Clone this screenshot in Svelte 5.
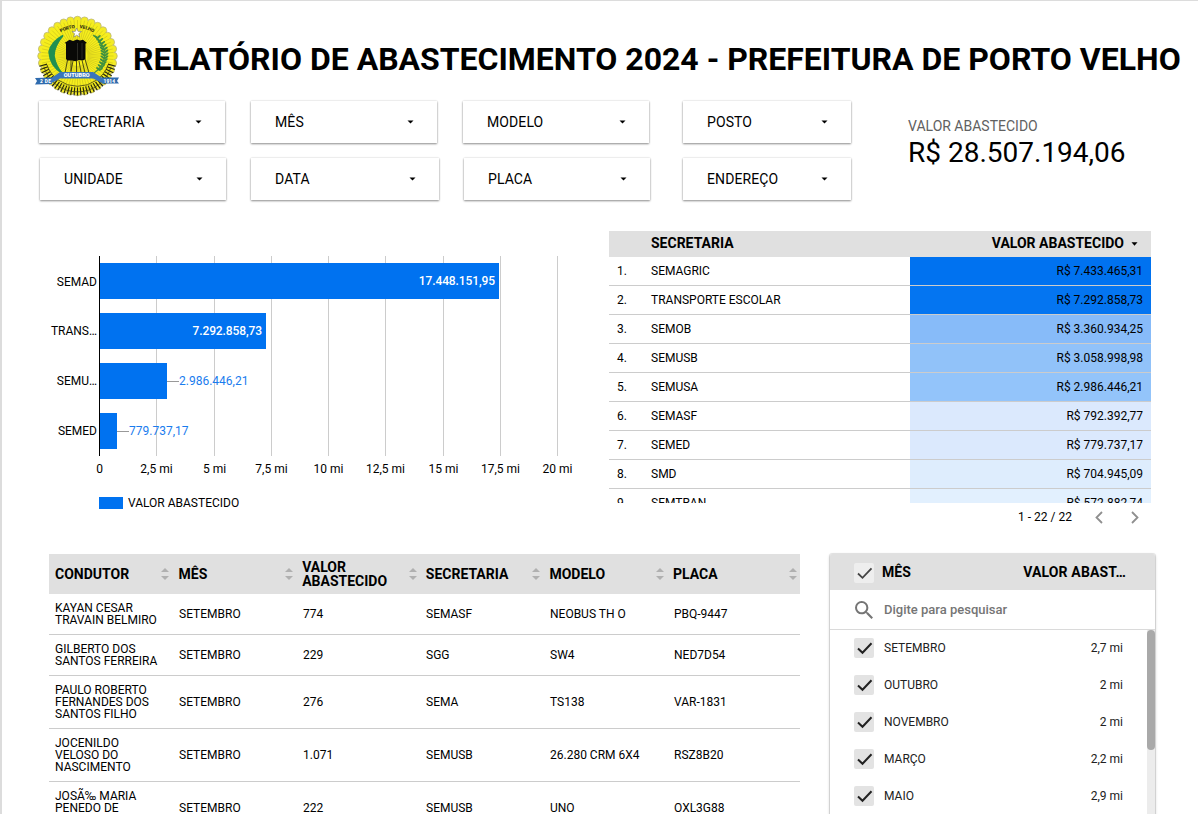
<script>
  const filterRows = [
    [
      { label: 'SECRETARIA', gap: 0, width: 186 },
      { label: 'MÊS', gap: 26, width: 186 },
      { label: 'MODELO', gap: 26, width: 186 },
      { label: 'POSTO', gap: 34, width: 168 }
    ],
    [
      { label: 'UNIDADE', gap: 1, width: 186 },
      { label: 'DATA', gap: 25, width: 188 },
      { label: 'PLACA', gap: 25, width: 186 },
      { label: 'ENDEREÇO', gap: 33, width: 168 }
    ]
  ];

  const bars = [
    { name: 'SEMAD', label: '17.448.151,95', w: 400, inside: true },
    { name: 'TRANS…', label: '7.292.858,73', w: 167, inside: true },
    { name: 'SEMU…', label: '2.986.446,21', w: 68, inside: false },
    { name: 'SEMED', label: '779.737,17', w: 18, inside: false }
  ];
  const ticks = [
    ['0', 99], ['2,5 mi', 156], ['5 mi', 214], ['7,5 mi', 271], ['10 mi', 328],
    ['12,5 mi', 385], ['15 mi', 443], ['17,5 mi', 500], ['20 mi', 557]
  ];

  const totals = [
    ['SEMAGRIC', '7.433.465,31', '#0072f0'],
    ['TRANSPORTE ESCOLAR', '7.292.858,73', '#0475f1'],
    ['SEMOB', '3.360.934,25', '#87bbf9'],
    ['SEMUSB', '3.058.998,98', '#91c2f9'],
    ['SEMUSA', '2.986.446,21', '#93c4fa'],
    ['SEMASF', '792.392,77', '#dbe9fd'],
    ['SEMED', '779.737,17', '#dbe9fd'],
    ['SMD', '704.945,09', '#deedfd'],
    ['SEMTRAN', '572.882,74', '#e2f0fe']
  ];

  const columns = ['CONDUTOR', 'MÊS', 'VALOR ABASTECIDO', 'SECRETARIA', 'MODELO', 'PLACA'];
  const rows = [
    ['KAYAN CESAR TRAVAIN BELMIRO', 'SETEMBRO', '774', 'SEMASF', 'NEOBUS TH O', 'PBQ-9447'],
    ['GILBERTO DOS SANTOS FERREIRA', 'SETEMBRO', '229', 'SGG', 'SW4', 'NED7D54'],
    ['PAULO ROBERTO FERNANDES DOS SANTOS FILHO', 'SETEMBRO', '276', 'SEMA', 'TS138', 'VAR-1831'],
    ['JOCENILDO VELOSO DO NASCIMENTO', 'SETEMBRO', '1.071', 'SEMUSB', '26.280 CRM 6X4', 'RSZ8B20'],
    ['JOSÃ‰ MARIA PENEDO DE', 'SETEMBRO', '222', 'SEMUSB', 'UNO', 'OXL3G88']
  ];

  const months = [
    ['SETEMBRO', '2,7 mi'], ['OUTUBRO', '2 mi'], ['NOVEMBRO', '2 mi'],
    ['MARÇO', '2,2 mi'], ['MAIO', '2,9 mi']
  ];

  const cx = 42.5, cy = 41;
  const at = (r, deg) => {
    const a = (deg * Math.PI) / 180;
    return [cx + r * Math.cos(a), cy + r * Math.sin(a)];
  };
  const seg = (r1, r2, deg) => `M${at(r1, deg).join(' ')}L${at(r2, deg).join(' ')}`;
  const petals = Array.from({ length: 32 }, (_, i) => at(36, i * 11.25));
  const rays = Array.from({ length: 64 }, (_, i) => seg(10, 36, i * 5.625)).join('');
  const sleepers = Array.from({ length: 31 }, (_, i) => seg(31.5, 39.5, 15 + i * 5)).join('');
  const leaves = Array.from({ length: 12 }, (_, i) => i);
</script>

<main>
  <header>
    <svg class="seal" width="84" height="82" viewBox="0 0 84 82">
      {#each petals as [x, y]}
        <circle cx={x} cy={y} r="3.800" fill="#f3ea28" stroke="#b5b07c" stroke-width=".7" />
      {/each}
      <circle {cx} {cy} r="36.500" fill="#f6ee1c" />
      <path d={rays} stroke="#bdb51c" stroke-width=".5" />
      <path d={sleepers} stroke="#26270c" stroke-width="1.200" />
      <path d="M9 52A35 35 0 0 0 76 52M12 50A32.500 32.500 0 0 0 73 50" fill="none" stroke="#3c3c14" stroke-width=".8" />
      <path d="M27 58Q15 51 14 37Q16 27 28 20.500Q19 31 19 41Q21 52 27 58z" fill="#219051" stroke="#219051" stroke-width="1.500" />
      <path d="M59 58Q70 51 70 37Q68 27 58 20" fill="none" stroke="#4f9440" stroke-width="1.3" />
      {#each leaves as i}
        <ellipse cx={67.8 - Math.pow(i - 6, 2) / 5.5} cy={22 + i * 2.9} rx="2.6" ry="1" transform={`rotate(35 ${67.8 - Math.pow(i - 6, 2) / 5.5} ${22 + i * 2.9})`} fill="#3c9140" />
        <ellipse cx={71.5 - Math.pow(i - 6, 2) / 4.6} cy={22 + i * 2.9} rx="2.6" ry="1" transform={`rotate(-40 ${71.5 - Math.pow(i - 6, 2) / 4.6} ${22 + i * 2.9})`} fill="#3c9140" />
      {/each}
      <path id="seal-arc" d="M23 19Q42 7 61 19" fill="none" />
      <text font-size="4.600" font-weight="900" fill="#2b2b10"><textPath href="#seal-arc" startOffset="50%" text-anchor="middle">PORTO &#160;&#160; VELHO</textPath></text>
      <path d="M41.700 13l1.300 3.300 3.500.2-2.700 2.200.9 3.400-3-1.900-3 1.900.9-3.400-2.700-2.200 3.500-.2z" fill="#fff" stroke="#77776c" stroke-width=".6" />
      <path d="M29.500 28l5-3.200 3.500 1.200 4-1.400 3 1 3-.8 4 3.200-1.500.6V44l-2 1.200h-5l-3 1-4-.6h-4L31 44V28.600z" fill="#090907" />
      <path d="M42.500 28V45M47 28V44" stroke="#41413a" stroke-width=".6" />
      <path d="M32.500 45L30 58M36 45V58M41.500 46V58M47 45L50 58M50 44L54 58M38 46L36 56M44 46L46 57" stroke="#3b3b14" stroke-width=".9" />
      <path d="M0 63L17 62.500V69L0 69.500 2 66zM67 62.500L84 62.500 82 66 84 68.500H67z" fill="#2f6bae" />
      <path d="M15 64L25 57H58L69 64V69L58 63.500H25L15 69z" fill="#3a76ba" />
      <text x="41.700" y="62.300" text-anchor="middle" font-size="5" font-weight="900" fill="white" textLength="26" lengthAdjust="spacingAndGlyphs">OUTUBRO</text>
      <text x="5" y="68" font-size="4.800" font-weight="900" fill="white" textLength="11">2 DE</text>
      <text x="68.500" y="67.700" font-size="4.800" font-weight="900" fill="white" textLength="11.500">1914</text>
    </svg>
    <h1>RELATÓRIO DE ABASTECIMENTO 2024 - PREFEITURA DE PORTO VELHO</h1>
  </header>

  <section class="top">
    <div class="filters">
      {#each filterRows as row}
        <div class="filter-row">
          {#each row as f}
            <div class="filter" style:margin-left="{f.gap}px" style:width="{f.width}px">
              <span>{f.label}</span>
              <svg width="7" height="4" viewBox="0 0 7 4"><path d="M.5 .5h6l-3 3z" fill="#000" /></svg>
            </div>
          {/each}
        </div>
      {/each}
    </div>
    <div class="kpi">
      <div class="kpi-label">VALOR ABASTECIDO</div>
      <div class="kpi-value">R$ 28.507.194,06</div>
    </div>
  </section>

  <section class="middle">
    <svg class="chart" width="560" height="290" viewBox="40 231 560 290">
      {#each ticks as [label, x], i}
        {#if i}<rect {x} y="256" width="1" height="200" fill="#ccc" />{/if}
        <text x={x + 0.5} y="473" text-anchor="middle">{label}</text>
      {/each}
      {#each bars as b, i}
        <rect x="99" y={263 + i * 50} width={b.w} height="36" fill="#0072f0" />
        <text x="97" y={286 + i * 50 - (i ? 1 : 0)} text-anchor="end">{b.name}</text>
        {#if b.inside}
          <text class="in" x={99 + b.w - 4} y={285 + i * 50} text-anchor="end">{b.label}</text>
        {:else}
          <rect x={99 + b.w} y={281 + i * 50} width="12" height="1" fill="#999" />
          <text class="out" x={99 + b.w + 12} y={285 + i * 50}>{b.label}</text>
        {/if}
      {/each}
      <rect x="99" y="256" width="1" height="200" fill="#000" />
      <rect x="99" y="497" width="24" height="12" fill="#0072f0" />
      <text x="128" y="507">VALOR ABASTECIDO</text>
    </svg>

    <div class="totals">
      <div class="totals-head">
        <span>SECRETARIA</span>
        <span class="sorted">VALOR ABASTECIDO
          <svg width="7" height="4" viewBox="0 0 7 4"><path d="M.5 .2h6l-3 3.600z" fill="#000" /></svg>
        </span>
      </div>
      <div class="totals-body">
        {#each totals as [name, value, color], i}
          <div class="totals-row">
            <span>{i + 1}.</span><span>{name}</span>
            <span class="heat" style:background={color}>R$ {value}</span>
          </div>
        {/each}
      </div>
      <div class="pager">
        <span>1 - 22 / 22</span>
        <svg width="8" height="13" viewBox="0 0 8 13"><path d="M7 1L1.500 6.500 7 12" /></svg>
        <svg width="8" height="13" viewBox="0 0 8 13"><path d="M1 1l5.500 5.500L1 12" /></svg>
      </div>
    </div>
  </section>

  <section class="bottom">
    <div class="detail">
      <div class="detail-row detail-head">
        {#each columns as c}
          <div><span>{c}</span>
            <svg width="8" height="12" viewBox="0 0 8 12"><path d="M0 4l4-4 4 4zM0 8h8l-4 4z" fill="#b0b0b0" /></svg>
          </div>
        {/each}
      </div>
      {#each rows as r}
        <div class="detail-row">
          {#each r as c}<div>{c}</div>{/each}
        </div>
      {/each}
    </div>

    <div class="picker">
      <div class="picker-head">
        {@render check('light')}
        <span>MÊS</span><span class="metric">VALOR ABAST…</span>
      </div>
      <div class="search">
        <svg width="18" height="18" viewBox="3 3 17.500 17.500"><path fill="#757575" d="M15.500 14h-.79l-.28-.27A6.471 6.471 0 0 0 16 9.500 6.500 6.500 0 1 0 9.500 16c1.610 0 3.090-.59 4.230-1.570l.27.28v.79l5 4.990L20.490 19l-4.990-5zm-6 0C7.010 14 5 11.990 5 9.500S7.010 5 9.500 5 14 7.010 14 9.500 11.990 14 9.500 14z" /></svg>
        <span>Digite para pesquisar</span>
      </div>
      <div class="list">
        <div class="items">
          {#each months as [m, v]}
            <div class="item">{@render check('')}<span>{m}</span><span>{v}</span></div>
          {/each}
        </div>
        <div class="track"><div class="thumb"></div></div>
      </div>
    </div>
  </section>
</main>

{#snippet check(kind)}
  <svg class="check {kind}" width="20" height="20" viewBox="0 0 20 20">
    <rect width="20" height="20" rx="2" />
    <path d="M4 10.500l4.500 4.300L17.500 5.300" />
  </svg>
{/snippet}

<style>
  :global(body) { overflow: hidden; background: #fff; }
  main {
    box-sizing: border-box;
    width: 1198px;
    height: 814px;
    overflow: hidden;
    border-left: 2px solid #dcdcdc;
    border-top: 1px solid #dcdcdc;
    font-family: Roboto, sans-serif;
    font-size: 12px;
    color: #000;
  }
  main :global(svg) { display: block; flex: none; }
  header { display: flex; height: 100px; padding-left: 33px; box-sizing: border-box; }
  .seal { margin-top: 14px; }
  h1 { margin: 39px 0 0 14px; font-size: 32px; line-height: 38px; font-weight: 700; white-space: nowrap; letter-spacing: -.01px; }

  .top { display: flex; height: 130px; padding-left: 37px; box-sizing: border-box; }
  .filters { display: flex; flex-direction: column; gap: 15px; width: 869px; }
  .filter-row { display: flex; height: 42px; }
  .filter {
    box-sizing: border-box;
    display: flex;
    align-items: center;
    justify-content: space-between;
    padding: 0 23px 0 24px;
    font-size: 14px;
    letter-spacing: .1px;
    background: #fff;
    box-shadow: 0 1px 2px rgba(0, 0, 0, .42), 0 0 2px rgba(0, 0, 0, .14);
  }
  .kpi-label { margin-top: 17px; font-size: 14px; line-height: 16px; color: #616161; }
  .kpi-value { font-size: 28px; line-height: 34px; margin-top: 2px; }

  .middle { display: flex; height: 323px; padding-left: 38px; box-sizing: border-box; }
  .chart text { font-size: 12px; fill: #000; }
  .chart text.in { fill: #fff; font-weight: 500; letter-spacing: -.1px; }
  .chart text.out { fill: #1a7cee; }

  .totals { width: 542px; margin-left: 9px; }
  .totals-head {
    display: flex;
    justify-content: space-between;
    height: 26px;
    box-sizing: border-box;
    padding: 0 13px 0 42px;
    background: #e0e0e0;
    font-size: 14px;
    font-weight: 700;
    line-height: 25px;
  }
  .sorted { display: flex; align-items: center; gap: 7px; height: 25px; }
  .totals-body { height: 246px; overflow: hidden; }
  .totals-row {
    display: grid;
    grid-template-columns: 42px 259px 241px;
    height: 28px;
    line-height: 28px;
    border-bottom: 1px solid #ccc;
  }
  .totals-row span:first-child { padding-left: 8px; }
  .heat { text-align: right; padding-right: 8px; }
  .pager { display: flex; align-items: center; justify-content: flex-end; height: 28px; padding-right: 12px; }
  .pager span { margin-right: 23px; }
  .pager svg + svg { margin-left: 28px; }
  .pager path { fill: none; stroke: #8f8f8f; stroke-width: 1.8; }

  .bottom { display: flex; height: 259px; padding-left: 47px; box-sizing: border-box; }
  .detail { width: 751px; }
  .detail-row {
    display: grid;
    grid-template-columns: 124px 124px 123px 124px 124px 132px;
    align-items: center;
    border-bottom: 1px solid #ccc;
    line-height: 12px;
  }
  .detail-row > div { padding: 8px 12px 8px 6px; }
  .detail-row:last-child { height: 52px; }
  .detail-row:last-child > div:first-child { align-self: start; }
  .detail-head { grid-template-columns: 124px 123.600px 123.600px 123.600px 123.600px 132.600px; height: 40px; border: 0; background: #e0e0e0; font-size: 14px; line-height: 14px; font-weight: 700; }
  .detail-head > div { display: flex; align-items: center; justify-content: space-between; padding: 0 4px 0 6px; }
  .detail-head > div:nth-child(n + 2) { padding: 0 3.400px 0 5.600px; }
  .detail-head span { max-width: 90px; margin-top: -1px; }

  .picker {
    width: 325px;
    height: 300px;
    margin-left: 30px;
    border-radius: 2px;
    box-shadow: 0 0 0 1px rgba(0, 0, 0, .08), 0 1px 3px rgba(0, 0, 0, .3);
  }
  .picker-head, .search, .item { display: flex; align-items: center; }
  .picker-head {
    height: 36px;
    box-sizing: border-box;
    background: #e0e0e0;
    border-radius: 2px 2px 0 0;
    padding: 1px 29px 0 24px;
    font-size: 14px;
    font-weight: 700;
  }
  .picker-head span { margin-top: -1px; }
  .picker-head span:nth-of-type(1) { margin-left: 8px; flex: 1; }
  .picker-head .metric { letter-spacing: .15px; }
  .check rect { fill: #e3e3e3; }
  .check.light rect { fill: #eee; }
  .check path { fill: none; stroke: #222; stroke-width: 2; }
  .check.light path { stroke: #444; stroke-width: 1.800; }
  .search { height: 39px; border-bottom: 1px solid #dadada; padding-left: 25px; color: #757575; font-size: 13px; font-weight: 500; }
  .search span { margin-left: 11px; }
  .list { display: flex; height: 224px; }
  .items { flex: 1; margin-top: -1px; color: #212121; }
  .item { height: 37px; padding: 0 24px; }
  .item span:nth-of-type(1) { margin-left: 10px; flex: 1; }
  .track { width: 8px; background: #ececec; }
  .thumb { height: 120px; border-radius: 4px; background: #a9a9a9; }
</style>
